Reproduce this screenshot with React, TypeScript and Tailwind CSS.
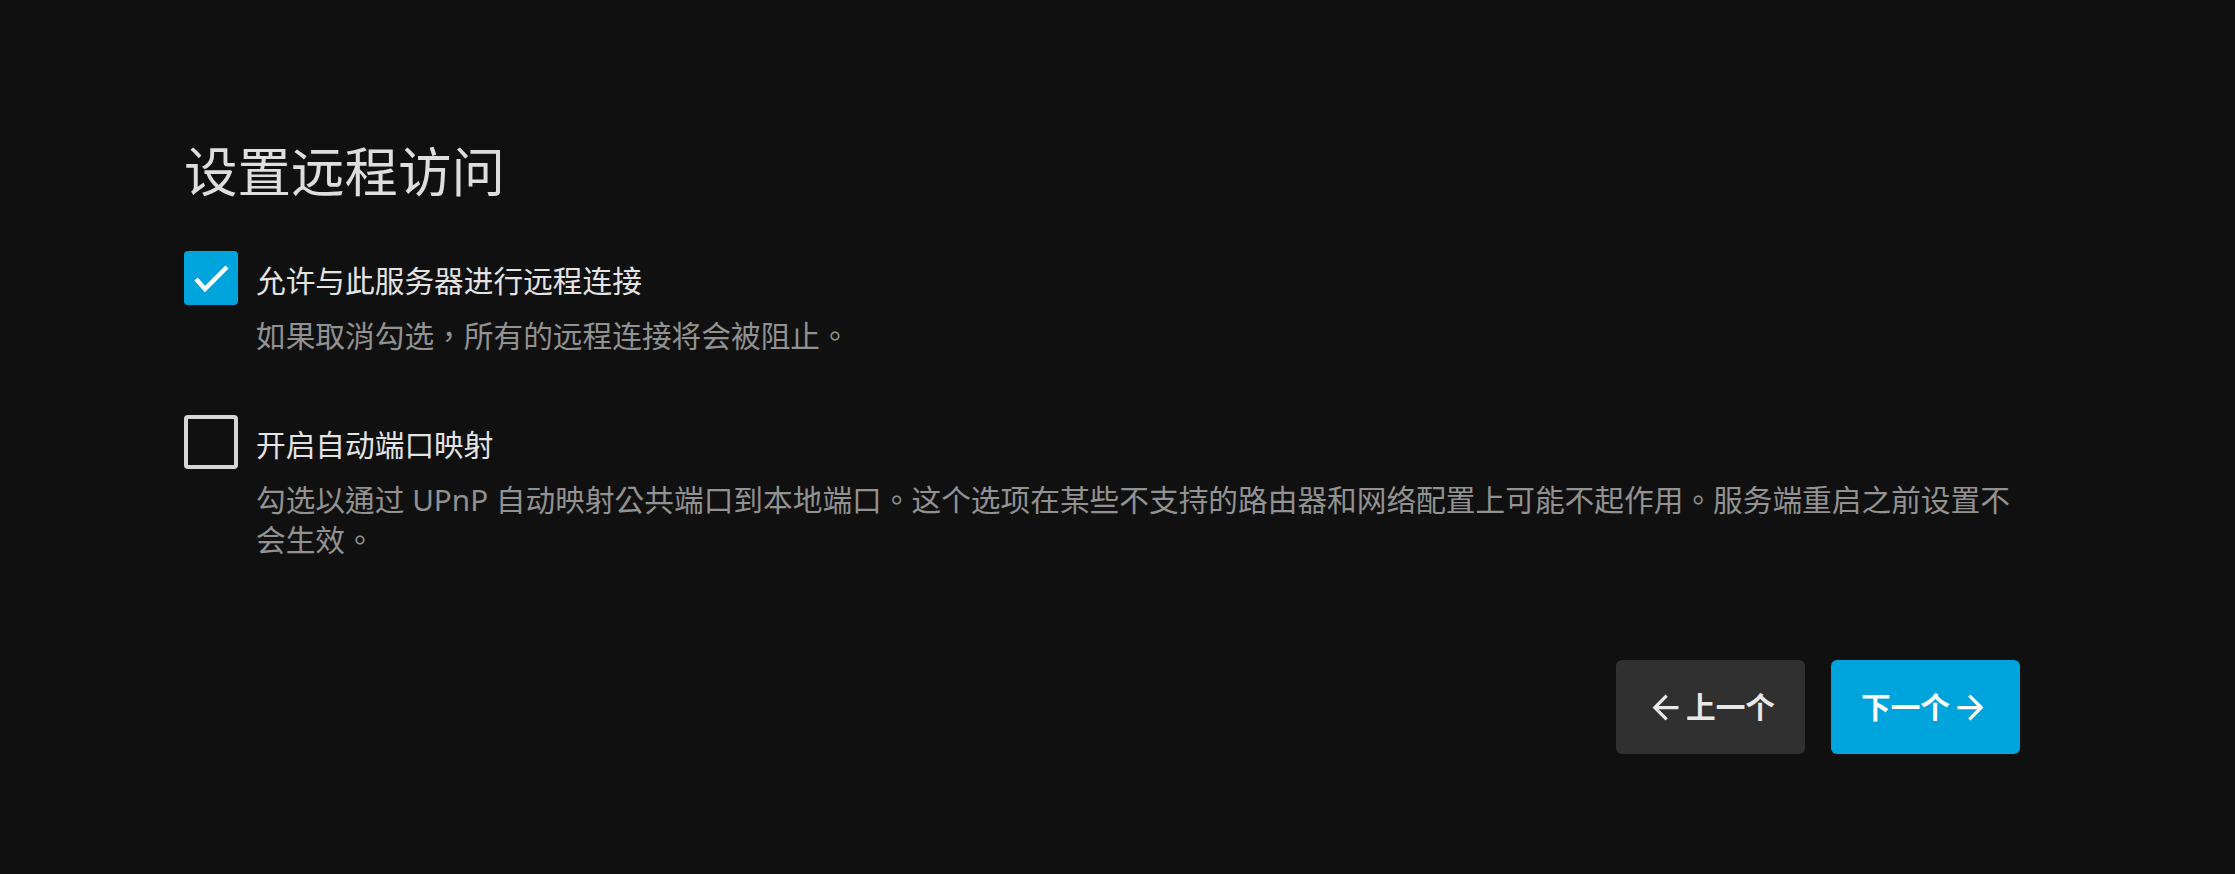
import React, { useState } from 'react';

const font = { fontFamily: '"Noto Sans", "Noto Sans CJK TC", "Noto Sans CJK SC", sans-serif' };

const Checkbox = ({ checked, onChange }: { checked: boolean; onChange: () => void }) => (
  <button
    onClick={onChange}
    className={
      checked
        ? 'w-[54px] h-[54px] shrink-0 rounded-[4px] bg-[#00a4dc] flex items-center justify-center'
        : 'w-[54px] h-[54px] shrink-0 rounded-[4px] border-[4px] border-[#d6d6d6]'
    }
  >
    {checked && (
      <svg width="54" height="54" viewBox="0 0 54 54">
        <polyline points="12,28 21,38 43,16" fill="none" stroke="#fff" strokeWidth="4.5" />
      </svg>
    )}
  </button>
);

const CheckField = ({
  label,
  desc,
  checked,
  onChange,
}: {
  label: string;
  desc: string;
  checked: boolean;
  onChange: () => void;
}) => (
  <div>
    <div className="flex items-center gap-[18px]">
      <Checkbox checked={checked} onChange={onChange} />
      <span className="text-[29.7px] leading-[40px] text-[#e4e4e4] pt-[5px]">{label}</span>
    </div>
    <p className="pl-[72px] mt-[11px] text-[29.7px] leading-[40px] text-[#929292]">{desc}</p>
  </div>
);

const ArrowBack = () => (
  <svg width="39" height="39" viewBox="0 0 24 24" fill="currentColor">
    <path d="M20 11H7.83l5.59-5.59L12 4l-8 8 8 8 1.41-1.41L7.83 13H20v-2z" />
  </svg>
);

const ArrowForward = () => (
  <svg width="39" height="39" viewBox="0 0 24 24" fill="currentColor">
    <path d="M12 4l-1.41 1.41L16.17 11H4v2h12.17l-5.58 5.59L12 20l8-8z" />
  </svg>
);

export default function App() {
  const [remote, setRemote] = useState(true);
  const [upnp, setUpnp] = useState(false);

  return (
    <div className="min-h-screen bg-[#101010]" style={font}>
      <div className="ml-[184px] w-[1836px] pt-[140px]">
        <h1 className="text-[53.5px] leading-[64px] text-[#dedede] font-normal">设置远程访问</h1>

        <div className="mt-[47px]">
          <CheckField
            label="允许与此服务器进行远程连接"
            desc="如果取消勾选，所有的远程连接将会被阻止。"
            checked={remote}
            onChange={() => setRemote(!remote)}
          />
        </div>

        <div className="mt-[59px]">
          <CheckField
            label="开启自动端口映射"
            desc="勾选以通过 UPnP 自动映射公共端口到本地端口。这个选项在某些不支持的路由器和网络配置上可能不起作用。服务端重启之前设置不会生效。"
            checked={upnp}
            onChange={() => setUpnp(!upnp)}
          />
        </div>

        <div className="mt-[100px] flex justify-end gap-[26px]">
          <button className="w-[189px] h-[94px] rounded-[6px] bg-[#303030] text-[#e8e8e8] flex items-center justify-center text-[29.7px] font-bold">
            <ArrowBack />
            <span className="ml-[1px]">上一个</span>
          </button>
          <button className="w-[189px] h-[94px] rounded-[6px] bg-[#00a4dc] text-white flex items-center justify-center text-[29.7px] font-bold">
            <span className="mr-[1px]">下一个</span>
            <ArrowForward />
          </button>
        </div>
      </div>
    </div>
  );
}
